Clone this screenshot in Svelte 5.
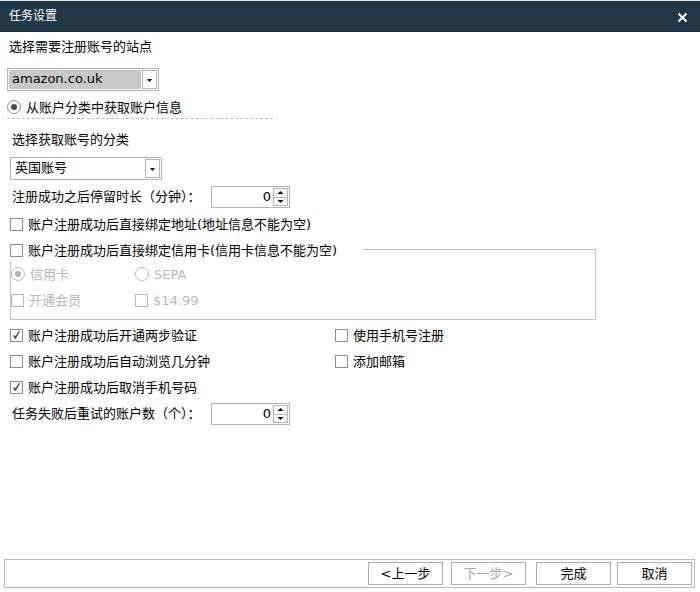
<script>
  let site = $state('amazon.co.uk');
  let category = $state('英国账号');
  let source = $state('category');
  let payment = $state('card');
  let stay = $state(0);
  let retries = $state(0);
  let bindAddress = $state(false);
  let bindCard = $state(false);
  let member = $state(false);
  let fee = $state(false);
  let options = $state([
    { text: '账户注册成功后开通两步验证', on: true },
    { text: '使用手机号注册', on: false },
    { text: '账户注册成功后自动浏览几分钟', on: false },
    { text: '添加邮箱', on: false },
    { text: '账户注册成功后取消手机号码', on: true }
  ]);
</script>

{#snippet arrow()}
  <span class="drop" aria-hidden="true">
    <svg width="5" height="3" viewBox="0 0 5 3"><path d="M0 0H5L2.5 3Z" /></svg>
  </span>
{/snippet}

{#snippet steps(up, down)}
  <span class="steps">
    <button type="button" aria-label="+" onclick={up}>
      <svg width="7" height="3" viewBox="0 0 7 3"><path d="M0.5 3H6.5L3.5 0Z" /></svg>
    </button>
    <button type="button" aria-label="-" onclick={down}>
      <svg width="7" height="3" viewBox="0 0 7 3"><path d="M0.5 0H6.5L3.5 3Z" /></svg>
    </button>
  </span>
{/snippet}

<div class="window">
  <header>
    <h1>任务设置</h1>
    <button type="button" class="close" aria-label="关闭">
      <svg width="11" height="11" viewBox="0 0 11 11"><path d="M1.5 1.5L9.5 9.5M9.5 1.5L1.5 9.5" /></svg>
    </button>
  </header>

  <main>
    <section class="source">
      <label class="caption" for="site">选择需要注册账号的站点</label>
      <div class="combo filled">
        <select id="site" bind:value={site}>
          <option>amazon.co.uk</option>
        </select>
        {@render arrow()}
      </div>
      <label class="choice from">
        <input type="radio" value="category" bind:group={source} />
        <span>从账户分类中获取账户信息</span>
      </label>
      <hr />
    </section>

    <section class="settings">
      <label class="caption" for="category">选择获取账号的分类</label>
      <div class="combo">
        <select id="category" bind:value={category}>
          <option>英国账号</option>
        </select>
        {@render arrow()}
      </div>

      <div class="field">
        <label for="stay">注册成功之后停留时长（分钟）：</label>
        <div class="spin">
          <input id="stay" type="number" min="0" bind:value={stay} />
          {@render steps(() => stay++, () => (stay = Math.max(0, stay - 1)))}
        </div>
      </div>

      <label class="choice">
        <input type="checkbox" bind:checked={bindAddress} />
        <span>账户注册成功后直接绑定地址(地址信息不能为空)</span>
      </label>

      <fieldset>
        <legend>
          <label class="choice">
            <input type="checkbox" bind:checked={bindCard} />
            <span>账户注册成功后直接绑定信用卡(信用卡信息不能为空)</span>
          </label>
        </legend>
        <div class="card">
          <label class="choice">
            <input type="radio" value="card" bind:group={payment} disabled={!bindCard} />
            <span>信用卡</span>
          </label>
          <label class="choice">
            <input type="radio" value="sepa" bind:group={payment} disabled={!bindCard} />
            <span>SEPA</span>
          </label>
          <label class="choice">
            <input type="checkbox" bind:checked={member} disabled={!bindCard} />
            <span>开通会员</span>
          </label>
          <label class="choice">
            <input type="checkbox" bind:checked={fee} disabled={!bindCard} />
            <span>$14.99</span>
          </label>
        </div>
      </fieldset>

      <div class="options">
        {#each options as option}
          <label class="choice">
            <input type="checkbox" bind:checked={option.on} />
            <span>{option.text}</span>
          </label>
        {/each}
      </div>

      <div class="field last">
        <label for="retries">任务失败后重试的账户数（个）：</label>
        <div class="spin">
          <input id="retries" type="number" min="0" bind:value={retries} />
          {@render steps(() => retries++, () => (retries = Math.max(0, retries - 1)))}
        </div>
      </div>
    </section>
  </main>

  <footer>
    <div class="pair">
      <button type="button">&lt;上一步</button>
      <button type="button" disabled>下一步&gt;</button>
    </div>
    <div class="pair">
      <button type="button">完成</button>
      <button type="button">取消</button>
    </div>
  </footer>
</div>

<style>
  :global(body) {
    background: #fff;
  }
  .window,
  .window * {
    box-sizing: border-box;
  }
  .window {
    display: flex;
    flex-direction: column;
    min-height: 100vh;
    font: 13px/20px 'DejaVu Sans', 'Noto Sans CJK SC', sans-serif;
    color: #000;
  }
  button,
  input,
  select {
    font: inherit;
    color: inherit;
    margin: 0;
    padding: 0;
  }
  header {
    display: flex;
    align-items: center;
    justify-content: space-between;
    height: 32px;
    padding: 0 12px 0 9px;
    background: #203848;
    border-top: 1px solid #dfe5e8;
    border-bottom: 1px solid #14283a;
    color: #fff;
  }
  h1 {
    margin: 0;
    font-size: 12px;
    line-height: 20px;
    font-weight: 400;
  }
  .close {
    display: flex;
    padding: 2px 0 0;
    border: 0;
    background: none;
  }
  .close path {
    stroke: #fff;
    stroke-width: 2;
    fill: none;
  }
  main {
    flex: 1;
    padding: 4px 0 20px;
  }
  .source {
    padding-left: 7px;
  }
  .settings {
    padding-left: 10px;
  }
  .caption {
    display: block;
    padding-left: 2px;
    line-height: 22px;
  }
  .combo {
    position: relative;
    width: 152px;
    height: 23px;
    margin-top: 6px;
    padding: 1px;
    border: 1px solid #b4b4b4;
    background: #fff;
  }
  .source .combo {
    margin-top: 10px;
  }
  select {
    appearance: none;
    display: block;
    width: 132px;
    height: 19px;
    padding: 0 3px 2px;
    border: 0;
    border-radius: 2px;
    outline: 0;
    background: transparent;
    line-height: 17px;
  }
  .filled select {
    background: #c8c8c8;
  }
  .drop {
    position: absolute;
    top: 1px;
    right: 1px;
    bottom: 1px;
    width: 15px;
    display: flex;
    align-items: center;
    justify-content: center;
    padding-top: 2px;
    border: 1px solid #b4b4b4;
    background: #fff;
    pointer-events: none;
  }
  .choice {
    display: flex;
    align-items: center;
    gap: 5px;
    height: 26px;
    width: fit-content;
    white-space: nowrap;
  }
  .choice span {
    padding-top: 2px;
  }
  .from {
    height: 20px;
    margin-top: 6px;
  }
  .choice input {
    appearance: none;
    display: grid;
    place-items: center;
    flex: none;
    width: 13px;
    height: 13px;
    border: 1px solid #8e8e8e;
    background: #fff;
  }
  .choice input[type='radio'] {
    width: 14px;
    height: 14px;
    border-radius: 50%;
  }
  .choice input[type='radio']:checked::before {
    content: '';
    width: 6px;
    height: 6px;
    border-radius: 50%;
    background: #4c4c4c;
  }
  .choice input[type='checkbox']:checked::before {
    content: '';
    width: 7px;
    height: 8px;
    background: #4c4c4c;
    clip-path: polygon(0 56%, 16% 50%, 32% 70%, 84% 0, 100% 6%, 38% 100%, 26% 100%);
  }
  .choice input:disabled {
    border-color: #b8b8b8;
  }
  .choice input[type='radio']:disabled:checked::before {
    background: #b0b0b0;
  }
  .choice:has(input:disabled) {
    color: #b8b8b8;
  }
  hr {
    width: 266px;
    margin: 1px 0 10px;
    border: 0;
    border-top: 1px dashed #c0c0c0;
  }
  .field {
    display: grid;
    grid-template-columns: 199px auto;
    justify-content: start;
    align-items: center;
    margin: 6px 0 3px;
    padding-left: 2px;
  }
  .last {
    margin-top: 3px;
  }
  .field label {
    white-space: nowrap;
  }
  .spin {
    display: flex;
    width: 79px;
    height: 22px;
    padding: 1px;
    border: 1px solid #b4b4b4;
  }
  .spin input {
    appearance: textfield;
    flex: 1;
    min-width: 0;
    padding: 0 2px 1px;
    border: 0;
    outline: 0;
    background: none;
    text-align: right;
  }
  .spin input::-webkit-inner-spin-button {
    appearance: none;
    margin: 0;
  }
  .steps {
    display: flex;
    flex-direction: column;
    width: 15px;
  }
  .steps button {
    flex: 1;
    display: flex;
    align-items: center;
    justify-content: center;
    border: 1px solid #b4b4b4;
    background: #fff;
  }
  .steps button + button {
    border-top: 0;
  }
  fieldset {
    min-width: 0;
    margin: 0 104px 2px 0;
    padding: 0 0 6px;
    border: 1px solid #c4c4c4;
  }
  legend {
    margin-left: -1px;
    padding: 2px 25px 0 0;
    background: #fff;
  }
  legend .choice {
    height: 22px;
  }
  .card {
    display: grid;
    grid-template-columns: 124px 1fr;
  }
  .options {
    display: grid;
    grid-template-columns: 325px 1fr;
  }
  footer {
    display: flex;
    justify-content: flex-end;
    gap: 10px;
    margin: 0 5px 4px 4px;
    padding: 2px;
    border: 1px solid #b8b8b8;
  }
  .pair {
    display: flex;
    gap: 6px;
  }
  .pair:first-child {
    gap: 8px;
  }
  footer button {
    width: 75px;
    height: 23px;
    border: 1px solid #acacac;
    background: #fff;
    white-space: nowrap;
  }
  footer button:disabled {
    color: #a8a8a8;
  }
</style>
